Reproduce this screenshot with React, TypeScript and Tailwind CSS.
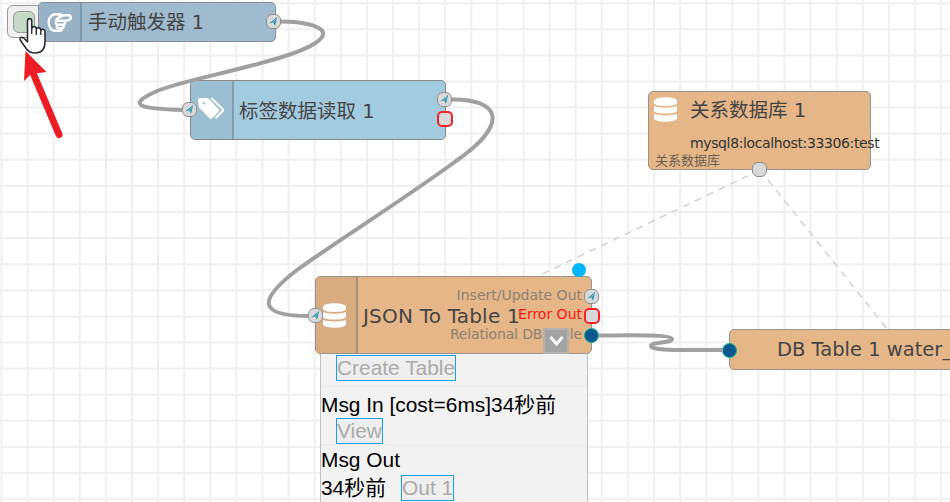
import React from 'react';

// --- Flow data ---

const GRID = 26.1;
const VERTICALS = Array.from({ length: 37 }, (_, i) => 1.5 + i * GRID);
const HORIZONTALS = Array.from({ length: 20 }, (_, i) => 3.2 + i * GRID);

const WIRES = [
  'M281 21.5 C326 22 348 37 279 58 C225 74 185 80 157 91 C126 105 138 109 183 110',
  'M452 99.5 C498 99 512 122 456 161 C400 202 340 239 297 270 C258 300 257 316 309 316',
  'M599 335.5 C620 335.5 671 334 672 339 C673 343 651 342 651 346 C651 351 690 350 723 350',
];

const LINKS = ['M760 170 L536 277', 'M760 170 L888 330'];

// --- Icons ---

const DatabaseIcon = () => (
  <svg className="h-[25px] w-[23px] shrink-0" viewBox="0 0 23 25" fill="#fff">
    <path d="M0 3.5 Q2 .3 11.5 .3 Q21 .3 23 3.5 V6.5 Q21 9 11.5 9 Q2 9 0 6.5 Z" />
    <path d="M0 9 Q4 10.7 11.5 10.7 Q19 10.7 23 9 V14.3 Q21 16.6 11.5 16.6 Q2 16.6 0 14.3 Z" />
    <path d="M0 17 Q4 18.4 11.5 18.4 Q19 18.4 23 17 V21.8 Q21 24.7 11.5 24.7 Q2 24.7 0 21.8 Z" />
  </svg>
);

const TagsIcon = () => (
  <svg className="h-[22px] w-[27px] shrink-0" viewBox="0 0 27 22">
    <path
      fillRule="evenodd"
      d="M2 0 H10 L21 11.5 Q22 12.5 21 13.5 L14 20.5 Q12.8 21.5 11.8 20.5 L1 9.5 L0 2 Q0 0 2 0 Z M5.8 4 A1.2 1.2 0 1 0 5.8 6.4 A1.2 1.2 0 1 0 5.8 4 Z"
      fill="#fff"
    />
    <path d="M13 .8 Q14 .8 15 1.8 L24.6 11 Q25.6 12.2 24.6 13.2 L17.5 20.2" fill="none" stroke="#fff" strokeWidth="2" />
  </svg>
);

const HandIcon = () => (
  <svg className="h-[21px] w-[26px]" viewBox="0 0 26 21" fill="none" stroke="#fff" strokeWidth="2.4" strokeLinecap="round" strokeLinejoin="round">
    <path d="M7.5 2.2 Q3.5 3.5 2 7.5 Q1.2 12 3 15.5 Q4.5 18.8 8 18.8 H12 Q15 18.8 15 16.4 Q17.3 15.5 16.4 13.4 Q18.8 12 17.2 9.2 L22 8 Q24.2 7 23.8 5 Q23.4 3 21 3.2 L12.5 3.8" />
    <path d="M7.5 2.2 H12.8 Q15.2 2.6 14 4.6 L9.5 7 M9.5 8.8 H16.8 M9.2 9 Q7.8 11.6 10.5 12.8 H16 M10.2 13 Q9 15.3 11 16.3 H14.4" />
  </svg>
);

// --- Parts ---

const Port = ({ className, kind = 'arrow' }: { className: string; kind?: 'arrow' | 'error' | 'plain' }) => (
  <div
    className={`absolute flex items-center justify-center bg-[#d9d9d9] ${
      kind === 'error'
        ? 'size-[16px] rounded-[5px] border-2 border-[#f5222d]'
        : 'size-[15px] rounded-[6px] border-[1.5px] border-[#8f8f8f]'
    } ${className}`}
  >
    {kind === 'arrow' && (
      <svg className="size-[11px] shrink-0" viewBox="0 0 11 11">
        <path d="M9.3 .8 L1.2 7.6 L5 6.6 L7 9.8 Z" fill="#2796ab" />
        <path d="M8.2 2.4 L5.2 6.4 L4.2 9.4" fill="none" stroke="#d9d9d9" strokeWidth=".6" />
      </svg>
    )}
  </div>
);

const Dot = ({ className }: { className: string }) => (
  <div className={`absolute size-[15px] rounded-full border-[1.5px] border-[#10b795] bg-[#0c578f] ${className}`} />
);

const Canvas = () => (
  <svg className="absolute inset-0 h-[502px] w-[950px]" viewBox="0 0 950 502" fill="none">
    {VERTICALS.map((x) => (
      <path key={x} d={`M${x} 0 V502`} stroke="#f0f0f0" strokeWidth="2" />
    ))}
    {HORIZONTALS.map((y) => (
      <path key={y} d={`M0 ${y} H950`} stroke="#f0f0f0" strokeWidth="2" />
    ))}
    {LINKS.map((d) => (
      <path key={d} d={d} stroke="#cfcfcf" strokeWidth="1.4" strokeDasharray="7 6" />
    ))}
  </svg>
);

const Wires = () => (
  <svg className="absolute inset-0 h-[502px] w-[950px]" viewBox="0 0 950 502" fill="none">
    {WIRES.map((d) => (
      <path key={d} d={d} stroke="#a0a0a0" strokeWidth="4" />
    ))}
  </svg>
);

const TriggerNode = () => (
  <>
    <div className="absolute top-[5px] left-[7px] flex h-[33px] w-[44px] items-center rounded-[6px] border-[1.5px] border-[#999] bg-[#f0f0f0] pl-[5px]">
      <div className="size-[22px] rounded-[6px] border-[1.5px] border-[#999] bg-[#c6d9c9]" />
    </div>
    <div className="absolute top-[2px] left-[38px] flex h-[40px] w-[238px] overflow-hidden rounded-[5px] border-[1.5px] border-[#8a8f93] bg-[#a0bbce]">
      <div className="flex w-[43px] items-center border-r-2 border-[#8297a6] bg-[#98b1c4] pl-[8px]">
        <HandIcon />
      </div>
      <span className="flex items-center pt-px pl-[6px] text-[19.5px] whitespace-pre">手动触发器 1</span>
    </div>
    <Port className="top-[14px] left-[266px]" />
  </>
);

const ReadNode = () => (
  <>
    <div className="absolute top-[80px] left-[190px] flex h-[60px] w-[256px] overflow-hidden rounded-[5px] border-[1.5px] border-[#85888a] bg-[#a3cbdf]">
      <div className="flex w-[43px] border-r-2 border-[#839da9] bg-[#9bbfd1] pt-[17px] pl-[7px]">
        <TagsIcon />
      </div>
      <span className="flex items-center pt-[3px] pl-[5px] text-[19.5px] whitespace-pre">标签数据读取 1</span>
    </div>
    <Port className="top-[102px] left-[182px]" />
    <Port className="top-[92px] left-[437px]" />
    <Port kind="error" className="top-[111px] left-[437px]" />
  </>
);

const DatabaseNode = () => (
  <>
    <div className="absolute top-[91px] left-[648px] h-[79px] w-[223px] rounded-[5px] border-[1.5px] border-[#969391] bg-[#e5b688]">
      <div className="flex gap-[13px] pt-[5px] pl-[5px]">
        <DatabaseIcon />
        <span className="text-[19.5px] leading-[28px] whitespace-pre">关系数据库 1</span>
      </div>
      <div className="pt-[9px] pl-[41px] text-[14px] leading-[18px] tracking-[-0.37px] whitespace-nowrap text-[#333]">
        mysql8:localhost:33306:test
      </div>
      <div className="pl-[6px] text-[13px] leading-[18px] text-[#6c5f52]">关系数据库</div>
    </div>
    <Port kind="plain" className="top-[162px] left-[752px]" />
  </>
);

const JsonNode = () => (
  <>
    <div className="absolute top-[276px] left-[315px] flex h-[78px] w-[277px] rounded-[5px] border-[1.5px] border-[#969391] bg-[#e5b688]">
      <div className="flex w-[42px] items-center rounded-l-[3px] border-r-2 border-[#a78f78] bg-[#d7ac81] pl-[7px]">
        <DatabaseIcon />
      </div>
      <span className="flex items-center pt-[2px] pl-[5px] text-[20px] tracking-[0.2px] whitespace-nowrap">JSON To Table 1</span>
      <div className="absolute top-[9px] right-[9px] text-right text-[14px] leading-[19.3px] whitespace-nowrap text-[#8f8171]">
        <div>Insert/Update Out</div>
        <div className="text-[#fa1414]">Error Out</div>
        <div className="tracking-[-0.15px]">Relational DB Table</div>
      </div>
    </div>
    <div className="absolute top-[328px] left-[543px] flex size-[26px] items-center justify-center border-2 border-[#b5b2af] bg-[#a3a3a3]">
      <svg className="h-[12px] w-[15px]" viewBox="0 0 15 12" fill="none">
        <path d="M1.5 2 L7.5 9 L13.5 2" stroke="#fff" strokeWidth="3" />
      </svg>
    </div>
    <div className="absolute top-[263px] left-[572px] size-[14px] rounded-full bg-[#00b7ff]" />
    <Port className="top-[308px] left-[308px]" />
    <Port className="top-[289px] left-[584px]" />
    <Port kind="error" className="top-[308px] left-[584px]" />
    <Dot className="top-[328px] left-[584px]" />
  </>
);

const TableNode = () => (
  <>
    <div className="absolute top-[329px] left-[729px] flex h-[41px] w-[240px] items-center rounded-[5px] border-[1.5px] border-[#969391] bg-[#e5b688] pt-px pl-[47px] text-[19.5px] whitespace-nowrap">
      DB Table 1 water_
    </div>
    <Dot className="top-[343px] left-[722px]" />
  </>
);

const ActionLink = ({ children }: { children: React.ReactNode }) => (
  <span className="inline-flex h-[26px] items-center border border-[#189fec] bg-[#eeeeee] text-[#aaa]">{children}</span>
);

const DebugPanel = () => (
  <div className="absolute top-[354px] left-[320px] h-[148px] w-[268px] border-x border-[#bfbfbf] bg-[#f2f2f2] font-['Liberation_Sans','Noto_Sans_CJK_SC',sans-serif] text-[20.9px] leading-[26px] text-black">
    <div className="flex h-[33px] border-b-2 border-[#ececec] pt-px pl-[15px]">
      <ActionLink>Create Table</ActionLink>
    </div>
    <div className="h-[59px] border-b-2 border-[#ececec] pt-[5px]">
      <div className="whitespace-nowrap">Msg In [cost=6ms]34秒前</div>
      <div className="flex pl-[15px]">
        <ActionLink>View</ActionLink>
      </div>
    </div>
    <div className="leading-[27px]">Msg Out</div>
    <div className="flex items-center gap-[15px] pt-px leading-[28px]">
      <span>34秒前</span>
      <ActionLink>Out 1</ActionLink>
    </div>
  </div>
);

const Pointer = () => (
  <>
    <svg className="absolute top-[48px] left-[20px] h-[94px] w-[48px]" viewBox="20 48 48 94" fill="none">
      <path d="M33.5 74 L59 134.5" stroke="#ee1c25" strokeWidth="7" strokeLinecap="round" />
      <path d="M25.5 51 L46.5 72 L31 74 L24 81 Z" fill="#ee1c25" />
    </svg>
    <svg className="absolute top-[16px] left-[17px] h-[40px] w-[32px]" viewBox="17 16 32 40">
      <path
        d="M27.5 38 V21 Q27.5 18.6 29.5 18.6 Q31.7 18.6 31.7 21 V29 Q32 26.5 34 26.5 Q36.3 26.8 36.3 29 Q36.8 27.5 38.6 27.6 Q40.6 28 40.8 30.2 Q41.2 29 43 29.3 Q45 29.8 45 32 V42 Q45 53 35 53 Q29.5 53 26.5 49 L20.5 40.5 Q19.3 38.5 21 37.5 Q22.8 37 24.5 38.7 L27.5 42 Z"
        fill="#fff"
        stroke="#2b2e38"
        strokeWidth="1.6"
        strokeLinejoin="round"
      />
      <path d="M31.7 28 V34 M36.3 29 V35 M40.8 30 V35" stroke="#2b2e38" strokeWidth="1.4" fill="none" />
    </svg>
  </>
);

export default function App() {
  return (
    <div className="relative h-[502px] w-[950px] overflow-hidden bg-white font-['DejaVu_Sans','Noto_Sans_CJK_SC',sans-serif] text-[#444]">
      <Canvas />
      <TriggerNode />
      <ReadNode />
      <DatabaseNode />
      <JsonNode />
      <TableNode />
      <DebugPanel />
      <Wires />
      <Pointer />
    </div>
  );
}
